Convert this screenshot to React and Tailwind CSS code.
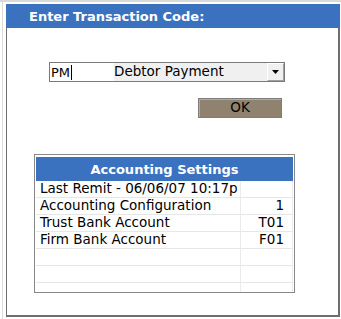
import React from 'react';

const rows = [
	['Last Remit - 06/06/07 10:17p', ''],
	['Accounting Configuration', '1'],
	['Trust Bank Account', 'T01'],
	['Firm Bank Account', 'F01'],
	['', ''],
	['', ''],
	['', ''],
];

const App = () => {
	return (
		<div className="w-[341px] h-[319px] bg-white border-t-2 border-[#d9d9d9] overflow-hidden font-['DejaVu_Sans',Verdana,sans-serif] text-[13px] leading-none text-black">
			<div className="h-full ml-[2px] border-l border-[#dcdcdc] pt-[2px]">
				<div className="ml-[3px] w-[334px]">
					<div className="h-[24px] bg-[#3b72c0] text-white font-bold flex items-center pl-[23px]">
						Enter Transaction Code:
					</div>
					<div className="h-[289px] border-l border-r-2 border-b-2 border-[#6e6e6e] pt-[34px]">
						<div className="ml-[42px] w-[236px] h-[20px] flex border border-[#7a7a7a]">
							<div className="w-[64px] bg-white flex items-center pl-[1px]">
								PM<span className="w-px h-[15px] bg-black ml-[1px]" />
							</div>
							<div className="flex-1 bg-[#f0f0f0] flex items-center text-[13.5px]">Debtor Payment</div>
							<div className="w-[17px] bg-[#f0f0f0] border-l border-t border-white border-r border-b border-r-[#a0a0a0] border-b-[#a0a0a0] flex items-center justify-center">
								<svg width="7" height="4" viewBox="0 0 7 4"><path d="M0 0h7L3.5 4z" fill="#000" /></svg>
							</div>
						</div>
						<div className="flex justify-end mr-[56px] mt-[16px]">
							<div className="w-[84px] h-[20px] bg-[#8f8370] border border-[#7c7c7c] shadow-[inset_1px_1px_0_#b5ab9b] flex items-center justify-center text-[13.5px]">
								OK
							</div>
						</div>
						<div className="ml-[27px] mt-[36px] w-[261px] h-[139px] border border-[#888888] p-px overflow-hidden">
							<div className="h-[24px] mt-px bg-[#3b72c0] text-white font-bold flex items-center justify-center">
								Accounting Settings
							</div>
							{rows.map(([label, value], i) => (
								<div key={i} className="flex h-[17px] border-b border-[#e6e6e6] text-[13.5px]">
									<div className="w-[205px] pl-[4px] flex items-center border-r border-[#ebebeb] whitespace-nowrap">{label}</div>
									<div className="flex-1 pr-[8px] flex items-center justify-end border-r border-[#ebebeb]">{value}</div>
								</div>
							))}
						</div>
					</div>
				</div>
			</div>
		</div>
	);
};

export default App;
